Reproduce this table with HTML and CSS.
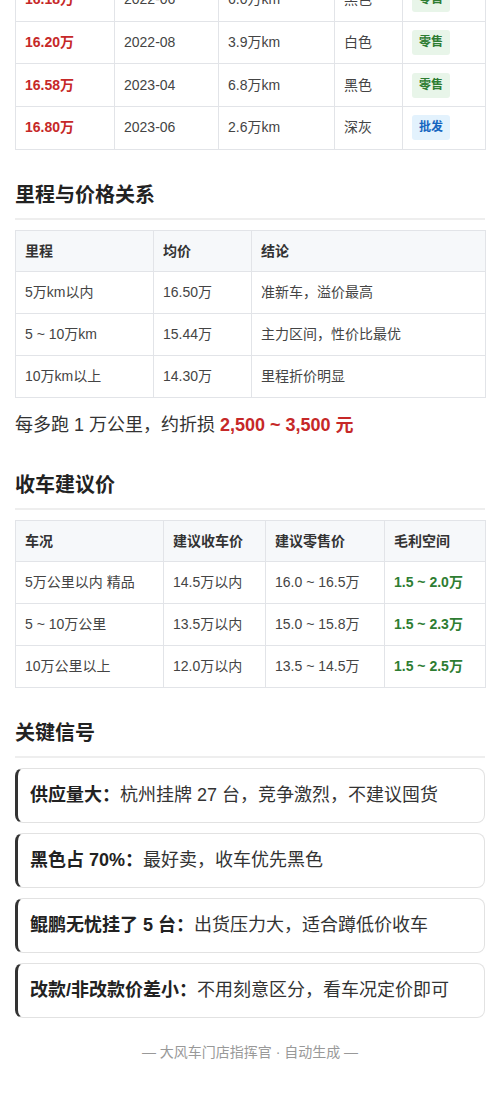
FILE: index.html
```html
<!DOCTYPE html>
<html lang="zh-CN">
<head>
<meta charset="utf-8">
<title>收车分析</title>
<link rel="stylesheet" href="styles.css">
</head>
<body>
<main class="page">
  <table class="tbl tbl-list">
    <colgroup>
      <col class="l1"><col class="l2"><col class="l3"><col class="l4"><col class="l5">
    </colgroup>
    <tbody>
      <tr><td class="price">16.18万</td><td>2022-06</td><td>6.0万km</td><td>黑色</td><td><span class="badge retail">零售</span></td></tr>
      <tr><td class="price">16.20万</td><td>2022-08</td><td>3.9万km</td><td>白色</td><td><span class="badge retail">零售</span></td></tr>
      <tr><td class="price">16.58万</td><td>2023-04</td><td>6.8万km</td><td>黑色</td><td><span class="badge retail">零售</span></td></tr>
      <tr><td class="price">16.80万</td><td>2023-06</td><td>2.6万km</td><td>深灰</td><td><span class="badge wholesale">批发</span></td></tr>
    </tbody>
  </table>

  <h2 class="title">里程与价格关系</h2>
  <table class="tbl">
    <colgroup>
      <col class="m1"><col class="m2"><col class="m3">
    </colgroup>
    <thead>
      <tr><th>里程</th><th>均价</th><th>结论</th></tr>
    </thead>
    <tbody>
      <tr><td>5万km以内</td><td>16.50万</td><td>准新车，溢价最高</td></tr>
      <tr><td>5 ~ 10万km</td><td>15.44万</td><td>主力区间，性价比最优</td></tr>
      <tr><td>10万km以上</td><td>14.30万</td><td>里程折价明显</td></tr>
    </tbody>
  </table>
  <p class="note">每多跑 1 万公里，约折损 <strong class="red">2,500 ~ 3,500 元</strong></p>

  <h2 class="title">收车建议价</h2>
  <table class="tbl">
    <colgroup>
      <col class="s1"><col class="s2"><col class="s3"><col class="s4">
    </colgroup>
    <thead>
      <tr><th>车况</th><th>建议收车价</th><th>建议零售价</th><th>毛利空间</th></tr>
    </thead>
    <tbody>
      <tr><td>5万公里以内 精品</td><td>14.5万以内</td><td>16.0 ~ 16.5万</td><td class="green">1.5 ~ 2.0万</td></tr>
      <tr><td>5 ~ 10万公里</td><td>13.5万以内</td><td>15.0 ~ 15.8万</td><td class="green">1.5 ~ 2.3万</td></tr>
      <tr><td>10万公里以上</td><td>12.0万以内</td><td>13.5 ~ 14.5万</td><td class="green">1.5 ~ 2.5万</td></tr>
    </tbody>
  </table>

  <h2 class="title">关键信号</h2>
  <div class="signals">
    <div class="signal"><strong>供应量大：</strong>杭州挂牌 27 台，竞争激烈，不建议囤货</div>
    <div class="signal"><strong>黑色占 70%：</strong>最好卖，收车优先黑色</div>
    <div class="signal"><strong>鲲鹏无忧挂了 5 台：</strong>出货压力大，适合蹲低价收车</div>
    <div class="signal"><strong>改款/非改款价差小：</strong>不用刻意区分，看车况定价即可</div>
  </div>

  <footer class="foot">— 大风车门店指挥官 · 自动生成 —</footer>
</main>
</body>
</html>
```

FILE: styles.css
```css
* { box-sizing: border-box; }

html, body {
  margin: 0;
  padding: 0;
  background: #ffffff;
}

body {
  font-family: "Liberation Sans", "Noto Sans CJK SC", sans-serif;
  color: #333333;
  font-size: 16px;
}

.page {
  padding: 0 15px 40px;
  margin-top: -22px;
}

.tbl {
  width: 100%;
  border-collapse: collapse;
  table-layout: fixed;
  font-size: 14px;
  line-height: 21px;
}

.tbl th,
.tbl td {
  border: 1px solid #e2e4e8;
  padding: 10px 9px;
  text-align: left;
  color: #444444;
  white-space: nowrap;
}

.tbl th {
  background: #f6f8fa;
  font-weight: 700;
  color: #333333;
  padding: 10px 9px 9px;
}

.tbl-list td {
  padding: 8px 9px;
  height: 42.7px;
}

.l1 { width: 99px; }
.l2 { width: 104px; }
.l3 { width: 116px; }
.l4 { width: 68px; }
.l5 { width: 83px; }

.m1 { width: 138px; }
.m2 { width: 98px; }
.m3 { width: 234px; }

.s1 { width: 148px; }
.s2 { width: 102px; }
.s3 { width: 119px; }
.s4 { width: 101px; }

.tbl td.price {
  color: #c62828;
  font-weight: 700;
}

.tbl td.green {
  color: #2e7d32;
  font-weight: 700;
}

.badge {
  display: inline-block;
  vertical-align: middle;
  font-size: 12px;
  line-height: 17px;
  font-weight: 700;
  padding: 4px 7px;
  border-radius: 3px;
}

.badge.retail {
  background: #e8f5e9;
  color: #2e7d32;
}

.badge.wholesale {
  background: #e3f2fd;
  color: #1565c0;
}

.title {
  font-size: 20px;
  line-height: 28px;
  font-weight: 700;
  color: #222222;
  margin: 31px 0 10px;
  padding-bottom: 9px;
  border-bottom: 2px solid #eeeeee;
}

.note {
  font-size: 18px;
  line-height: 28px;
  margin: 13px 0 32px;
  color: #333333;
}

.red {
  color: #c62828;
  font-weight: 700;
}

.signals {
  display: flex;
  flex-direction: column;
  gap: 10px;
}

.signal {
  font-size: 18px;
  line-height: 27px;
  padding: 13px 12px;
  border: 1px solid #e2e2e2;
  border-left: 3px solid #333333;
  border-radius: 8px;
  background: #ffffff;
  color: #333333;
}

.signal strong {
  color: #222222;
  font-weight: 700;
}

.foot {
  margin-top: 24px;
  text-align: center;
  font-size: 14px;
  line-height: 21px;
  color: #999999;
}
```
